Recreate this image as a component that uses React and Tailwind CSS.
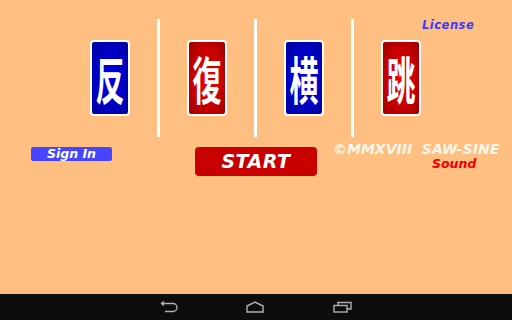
const cards = [
  { ch: '反', color: 'blue' },
  { ch: '復', color: 'red' },
  { ch: '横', color: 'blue' },
  { ch: '跳', color: 'red' },
];

function Card({ ch, color }) {
  const bg =
    color === 'blue'
      ? 'bg-[radial-gradient(ellipse_at_center,#0000e8_0%,#0000c0_60%,#00009c_100%)]'
      : 'bg-[radial-gradient(ellipse_at_center,#ee0000_0%,#c40000_60%,#9a0000_100%)]';
  return (
    <div
      className={`flex h-[76px] w-[40px] items-center justify-center overflow-hidden rounded-[4px] border-2 border-white ${bg}`}
    >
      <span className="scale-y-[1.75] text-[29px] font-bold leading-none text-white [font-family:'Noto_Sans_CJK_JP',sans-serif]">
        {ch}
      </span>
    </div>
  );
}

function Divider() {
  return <div className="h-[118px] w-[3px] bg-white" />;
}

function NavBar() {
  return (
    <div className="flex h-[26px] items-center bg-[#0d0d0d]">
      <svg width="20" height="12" viewBox="0 0 20 12" className="ml-[160px]" fill="none" stroke="#b0b0b0" strokeWidth="1.4">
        <path d="M1.5 2.5 H13 a4 4 0 0 1 0 8 H5" />
        <path d="M4 0.5 L1.5 2.5 L4 4.5" />
      </svg>
      <svg width="18" height="12" viewBox="0 0 18 12" className="ml-[66px]" fill="none" stroke="#b0b0b0" strokeWidth="1.4">
        <path d="M1 5 L9 1 L17 5 V11 H1 Z" />
      </svg>
      <svg width="20" height="12" viewBox="0 0 20 12" className="ml-[69px]" fill="none" stroke="#b0b0b0" strokeWidth="1.4">
        <rect x="1" y="4.5" width="13" height="6.5" />
        <path d="M5 4.5 V1.5 H18 V8 H14" />
      </svg>
    </div>
  );
}

export default function App() {
  return (
    <div className="flex h-[320px] w-[512px] flex-col overflow-hidden bg-[#ffbf80] [font-family:'DejaVu_Sans',sans-serif]">
      <div className="flex-1">
        <div className="flex items-start pt-[19px]">
          <div className="ml-[90px] flex items-center gap-[27px]">
            <Card {...cards[0]} />
            <Divider />
            <Card {...cards[1]} />
            <Divider />
            <Card {...cards[2]} />
            <Divider />
            <Card {...cards[3]} />
          </div>
          <span className="-mt-[2px] ml-[1px] text-[11.5px] font-bold italic tracking-[0.5px] text-[#3a3aff]">
            License
          </span>
        </div>

        <div className="mt-[4px] flex items-start">
          <button className="ml-[31px] mt-[6px] flex h-[14px] w-[81px] items-center justify-center rounded-[2px] bg-[#4646ff] text-[12.5px] font-bold italic leading-none text-white">
            Sign In
          </button>
          <button className="ml-[83px] mt-[6px] flex h-[29px] w-[122px] items-center justify-center rounded-[4px] bg-[#c80000] text-[19px] font-bold italic leading-none tracking-[0.5px] text-white">
            START
          </button>
          <div className="ml-[16px] flex flex-col">
            <span className="whitespace-pre text-[14px] font-bold italic leading-[16px] text-[#fff6ee]">
              ©MMXVIII  SAW-SINE
            </span>
            <span className="ml-[99px] text-[12.5px] font-bold italic leading-[14px] text-[#ee0000]">
              Sound
            </span>
          </div>
        </div>
      </div>
      <NavBar />
    </div>
  );
}
